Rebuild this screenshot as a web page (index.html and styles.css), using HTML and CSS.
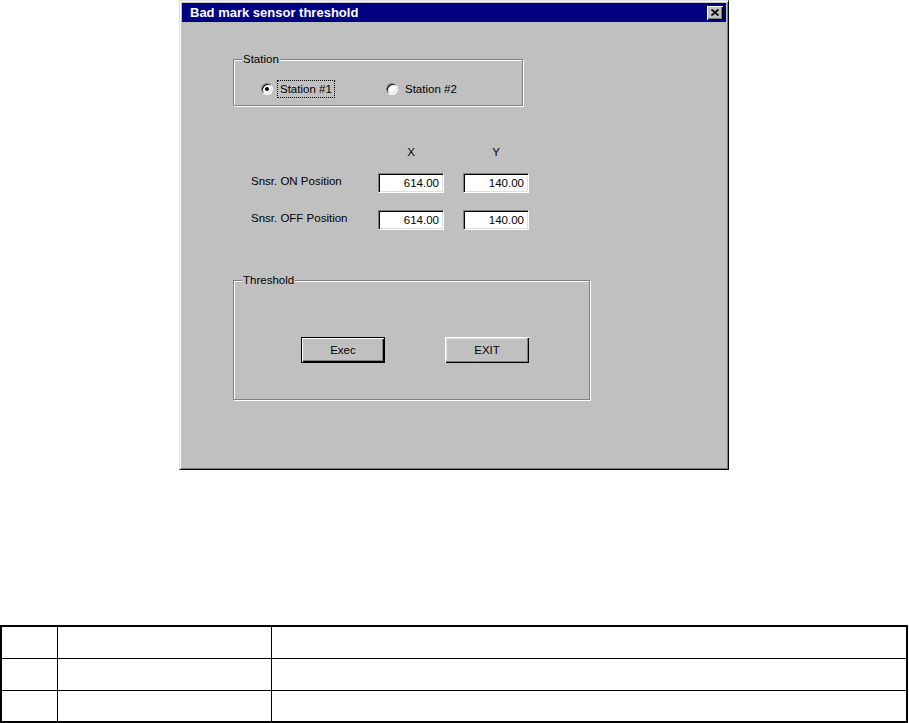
FILE: index.html
```html
<!DOCTYPE html>
<html>
<head>
<meta charset="utf-8">
<link rel="stylesheet" href="styles.css">
</head>
<body>
<div class="dialog">
  <div class="titlebar">
    <span class="title">Bad mark sensor threshold</span>
    <span class="close"><svg width="8" height="7" viewBox="0 0 8 7"><path d="M0.5 0.5 L7.5 6.5 M7.5 0.5 L0.5 6.5" stroke="#000" stroke-width="1.8" fill="none"/></svg></span>
  </div>
  <div class="content">
    <div class="group station">
      <span class="group-label">Station</span>
      <div class="radios">
        <div class="option"><span class="radio checked"></span><span class="opt-text focus">Station #1</span></div>
        <div class="option"><span class="radio"></span><span class="opt-text">Station #2</span></div>
      </div>
    </div>
    <div class="positions">
      <div class="pos-row head"><span class="pos-label"></span><span class="col-head">X</span><span class="col-head">Y</span></div>
      <div class="pos-row"><span class="pos-label">Snsr. ON Position</span><span class="field">614.00</span><span class="field">140.00</span></div>
      <div class="pos-row second"><span class="pos-label">Snsr. OFF Position</span><span class="field">614.00</span><span class="field">140.00</span></div>
    </div>
    <div class="group threshold">
      <span class="group-label">Threshold</span>
      <div class="buttons">
        <button class="btn default">Exec</button>
        <button class="btn">EXIT</button>
      </div>
    </div>
  </div>
</div>
<table class="grid">
  <tr class="r1"><td class="c1"></td><td class="c2"></td><td class="c3"></td></tr>
  <tr class="r2"><td class="c1"></td><td class="c2"></td><td class="c3"></td></tr>
  <tr class="r3"><td class="c1"></td><td class="c2"></td><td class="c3"></td></tr>
</table>
</body>
</html>
```
FILE: styles.css
```css
html, body {
  margin: 0;
  padding: 0;
  background: #fff;
}
body {
  font-family: "Liberation Sans", Arial, sans-serif;
  font-size: 11.5px;
  color: #000;
}
.dialog {
  box-sizing: border-box;
  width: 550px;
  height: 470px;
  margin-left: 179px;
  background: #c0c0c0;
  border: 1px solid;
  border-color: #dfdfdf #000 #000 #dfdfdf;
  box-shadow: inset 1px 1px #fff, inset -1px -1px #808080;
  padding: 2px;
}
.titlebar {
  height: 19px;
  background: #000080;
  color: #fff;
  display: flex;
  align-items: center;
  justify-content: space-between;
  padding-left: 8px;
  padding-right: 3px;
}
.title {
  font-weight: bold;
  font-size: 13px;
  line-height: 16px;
}
.close {
  box-sizing: border-box;
  width: 16px;
  height: 14px;
  background: #c0c0c0;
  box-shadow: inset 1px 1px #fff, inset -1px -1px #000, inset -2px -2px #808080;
  display: flex;
  align-items: center;
  justify-content: center;
}
.close svg {
  display: block;
  margin-top: -1px;
}
.content {
  padding-left: 51px;
}
.group {
  position: relative;
  box-sizing: border-box;
  border: 1px solid #808080;
  box-shadow: inset 1px 1px #fff, 1px 1px #fff;
}
.group-label {
  position: absolute;
  top: -8px;
  left: 8px;
  padding: 0 1px;
  line-height: 14px;
  background: #c0c0c0;
}
.station {
  margin-top: 37px;
  width: 290px;
  height: 47px;
  padding-top: 20px;
  padding-left: 27px;
}
.radios {
  display: flex;
  align-items: center;
  height: 18px;
}
.option {
  width: 125px;
  display: flex;
  align-items: center;
}
.radio {
  position: relative;
  box-sizing: border-box;
  width: 12px;
  height: 12px;
  border-radius: 50%;
  border: 1px solid;
  border-color: #808080 #fff #fff #808080;
  background: #fff;
  box-shadow: inset 1px 1px #000, inset -1px -1px #dfdfdf;
  flex: none;
}
.radio.checked::after {
  content: "";
  position: absolute;
  left: 3px;
  top: 3px;
  width: 4px;
  height: 4px;
  border-radius: 50%;
  background: #000;
}
.opt-text {
  margin-left: 4px;
  padding: 0 2px;
  line-height: 16px;
  border: 1px dotted transparent;
}
.opt-text.focus {
  border-color: #000;
}
.positions {
  margin-left: 18px;
  margin-top: 39px;
}
.pos-row {
  display: flex;
  align-items: center;
  margin-top: 14px;
}
.pos-row.head {
  margin-top: 0;
  height: 14px;
}
.pos-row.second {
  margin-top: 17px;
}
.pos-label {
  width: 127px;
  padding-bottom: 4px;
}
.head .pos-label {
  padding-bottom: 0;
}
.col-head {
  width: 66px;
  text-align: center;
  line-height: 14px;
}
.col-head + .col-head {
  margin-left: 19px;
}
.field {
  box-sizing: border-box;
  width: 66px;
  height: 20px;
  background: #fff;
  border: 1px solid;
  border-color: #808080 #fff #fff #808080;
  box-shadow: inset 1px 1px #000, inset -1px -1px #dfdfdf;
  text-align: right;
  padding-right: 4px;
  line-height: 18px;
}
.field + .field {
  margin-left: 19px;
}
.threshold {
  margin-top: 50px;
  width: 357px;
  height: 120px;
  padding-top: 56px;
  padding-left: 67px;
}
.buttons {
  display: flex;
}
.btn {
  box-sizing: border-box;
  width: 84px;
  height: 26px;
  padding: 0;
  margin: 0;
  font-family: "Liberation Sans", Arial, sans-serif;
  font-size: 11.5px;
  color: #000;
  background: #c0c0c0;
  border: 0;
  box-shadow: inset 1px 1px #fff, inset -1px -1px #000, inset -2px -2px #808080, inset 2px 2px #dfdfdf;
}
.btn.default {
  border: 1px solid #000;
  box-shadow: inset 1px 1px #fff, inset -1px -1px #000, inset -2px -2px #808080;
}
.btn + .btn {
  margin-left: 60px;
}
.grid {
  margin-top: 155px;
  width: 908px;
  border-spacing: 0;
  border: 2px solid #000;
  box-sizing: border-box;
}
.grid td {
  padding: 0;
  border-right: 1px solid #000;
  border-bottom: 1px solid #000;
}
.grid td.c3 {
  border-right: 0;
}
.grid tr.r3 td {
  border-bottom: 0;
}
.grid .c1 { width: 55px; }
.grid .c2 { width: 213px; }
.grid tr.r1 td, .grid tr.r2 td { height: 31px; }
.grid tr.r3 td { height: 30px; }
```
